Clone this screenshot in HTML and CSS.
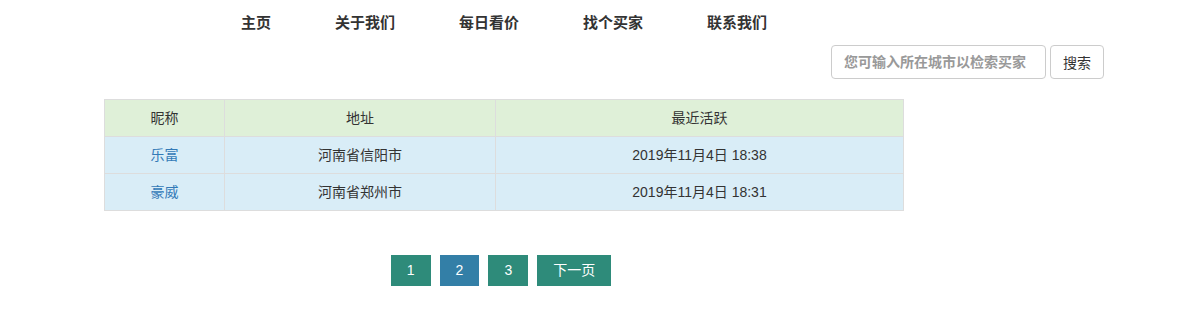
FILE: index.html
```html
<!DOCTYPE html>
<html lang="zh">
<head>
<meta charset="utf-8">
<title>买家列表</title>
<link rel="stylesheet" href="styles.css">
</head>
<body>
<div class="page">
  <nav class="nav">
    <a class="nav-item" href="#">主页</a>
    <a class="nav-item" href="#">关于我们</a>
    <a class="nav-item" href="#">每日看价</a>
    <a class="nav-item" href="#">找个买家</a>
    <a class="nav-item" href="#">联系我们</a>
  </nav>
  <form class="search">
    <input class="search-input" type="text" placeholder="您可输入所在城市以检索买家">
    <button class="search-btn" type="button">搜索</button>
  </form>
  <table class="buyers">
    <thead>
      <tr class="head-row">
        <th class="col-name">昵称</th>
        <th class="col-addr">地址</th>
        <th class="col-time">最近活跃</th>
      </tr>
    </thead>
    <tbody>
      <tr class="info-row">
        <td><a class="name-link" href="#">乐富</a></td>
        <td>河南省信阳市</td>
        <td>2019年11月4日 18:38</td>
      </tr>
      <tr class="info-row">
        <td><a class="name-link" href="#">豪威</a></td>
        <td>河南省郑州市</td>
        <td>2019年11月4日 18:31</td>
      </tr>
    </tbody>
  </table>
  <div class="pager">
    <a class="page-btn" href="#">1</a>
    <a class="page-btn current" href="#">2</a>
    <a class="page-btn" href="#">3</a>
    <a class="page-btn" href="#">下一页</a>
  </div>
</div>
</body>
</html>
```
FILE: styles.css
```css
* { box-sizing: border-box; }
html, body { margin: 0; padding: 0; background: #fff; }
body {
  font-family: "Liberation Sans", "Noto Sans CJK SC", sans-serif;
  font-size: 14px;
  color: #333;
}
.page {
  padding-left: 104px;
  padding-right: 91px;
}
.nav {
  width: 800px;
  display: flex;
  justify-content: center;
  padding-top: 13px;
}
.nav-item {
  display: block;
  padding: 0 32px;
  line-height: 20px;
  font-size: 15px;
  font-weight: bold;
  color: #333;
  text-decoration: none;
}
.search {
  display: flex;
  justify-content: flex-end;
  margin: 12px 0 0;
}
.search-input {
  width: 215px;
  height: 34px;
  border: 1px solid #ccc;
  border-radius: 4px;
  padding: 0 12px;
  font-family: inherit;
  font-size: 14px;
  font-weight: bold;
  color: #555;
  outline: none;
}
.search-input::placeholder { color: #999; }
.search-btn {
  margin-left: 4px;
  height: 34px;
  padding: 0 12px;
  border: 1px solid #ccc;
  border-radius: 4px;
  background: #fff;
  font-family: inherit;
  font-size: 14px;
  color: #333;
}
.buyers {
  width: 800px;
  margin-top: 20px;
  border-collapse: collapse;
  border: 1px solid #ddd;
  text-align: center;
}
.buyers th, .buyers td {
  border: 1px solid #ddd;
  padding: 8px;
  line-height: 20px;
  font-weight: normal;
}
.col-name { width: 120px; }
.col-addr { width: 271px; }
.head-row { background: #dff0d8; }
.info-row { background: #d9edf7; }
.name-link { color: #337ab7; text-decoration: none; }
.pager {
  width: 800px;
  display: flex;
  justify-content: center;
  gap: 9px;
  margin-top: 44px;
  padding-right: 6px;
}
.page-btn {
  display: block;
  height: 31px;
  line-height: 31px;
  padding: 0 16px;
  background: #2e8b7a;
  color: #fff;
  text-decoration: none;
  font-size: 14px;
}
.page-btn.current { background: #337fa7; }
```
